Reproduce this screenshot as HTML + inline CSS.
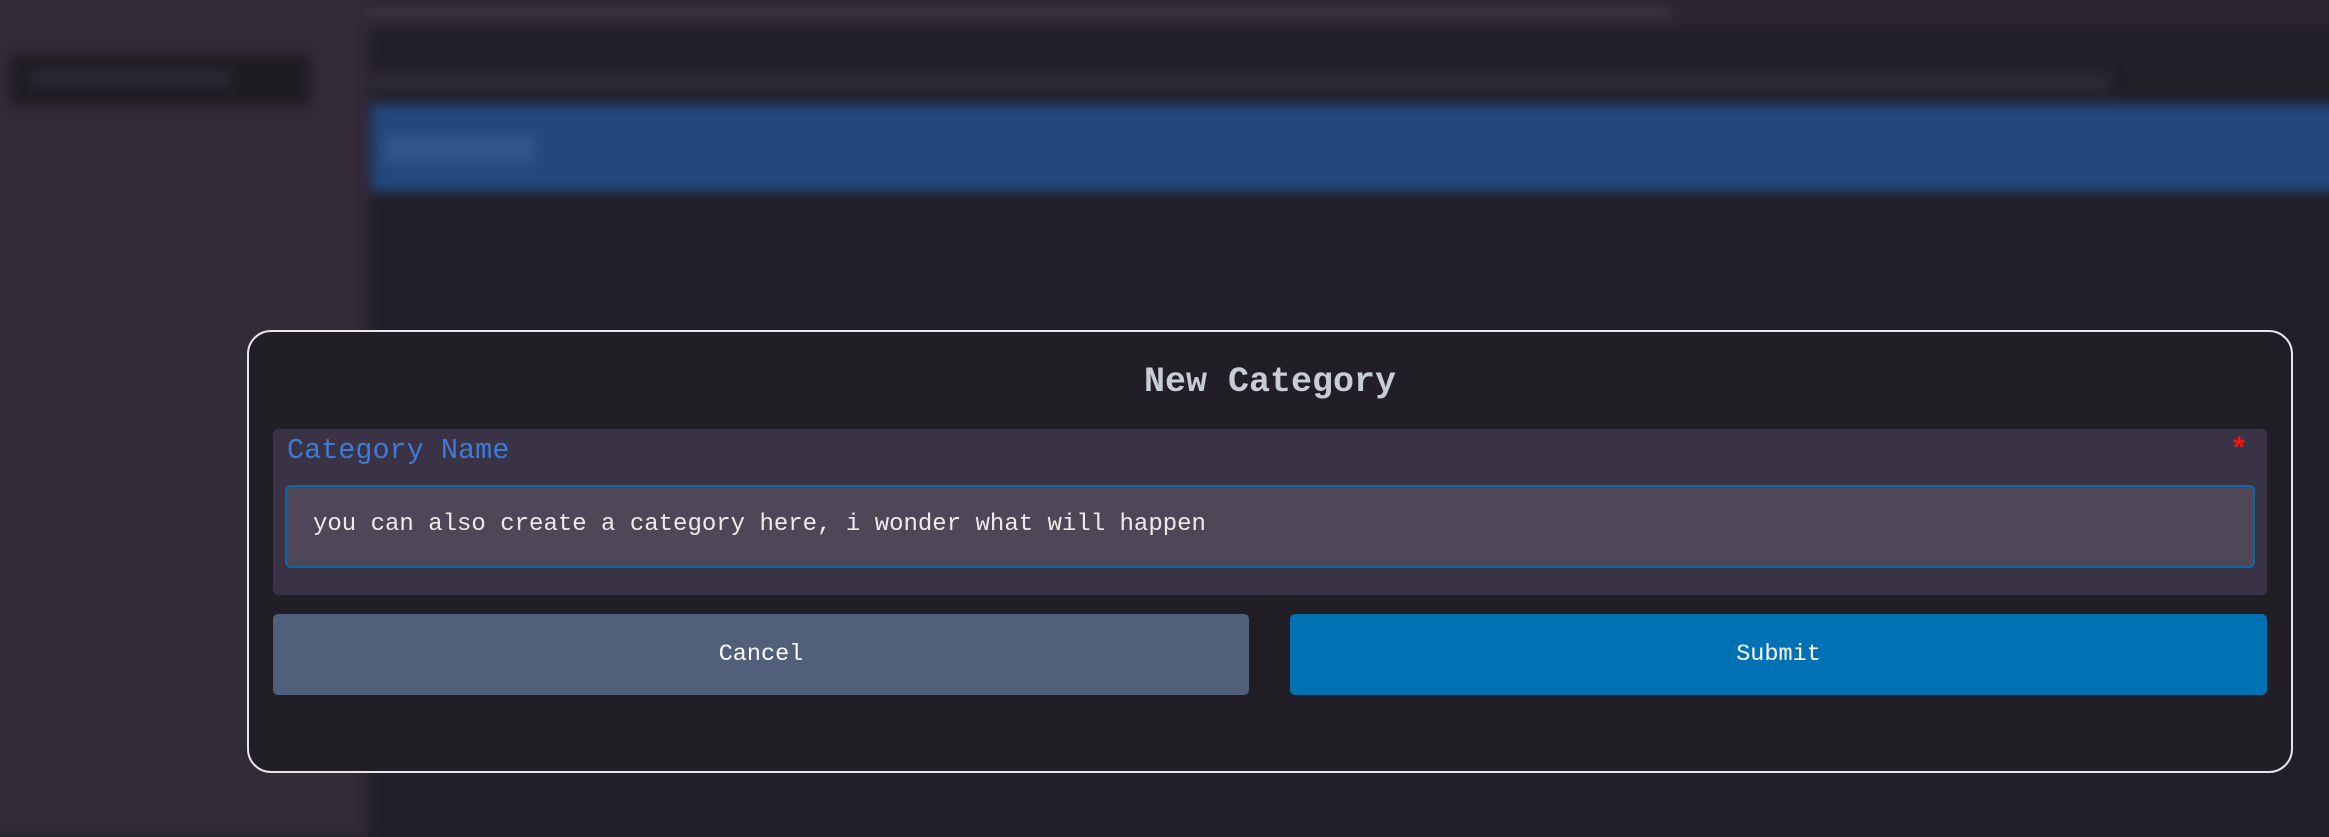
<!DOCTYPE html>
<html><head><meta charset="utf-8"><style>
html,body{margin:0;padding:0;width:2329px;height:817px;overflow:hidden;background:#221f29;font-family:"Liberation Mono",monospace;}
.bg{position:absolute;left:-20px;top:-20px;width:2369px;height:857px;filter:blur(6px);}
.bg>div{position:absolute;}
.side{left:0;top:0;width:388px;height:857px;background:#322b38;}
.top{left:0;top:0;width:2369px;height:50px;background:#2a2530;}
.topt{left:120px;top:26px;width:1570px;height:14px;background:#3a3440;}
.sbtn{left:30px;top:75px;width:300px;height:50px;background:#1e1b22;}
.sbtn2{left:50px;top:90px;width:200px;height:16px;background:#2e2a33;}
.line2{left:390px;top:92px;width:1740px;height:20px;background:#2d2935;}
.blue{left:391px;top:124px;width:1978px;height:88px;background:#22487c;}
.bl2{left:405px;top:155px;width:150px;height:28px;background:#33568a;}
.modal{position:absolute;left:247px;top:330px;width:2046px;height:443px;border:2px solid #e6e6ee;border-radius:24px;background:#211f25;box-sizing:border-box;}
.title{position:absolute;left:0;right:0;top:30px;text-align:center;color:#c8ccd4;font-weight:bold;font-size:35px;}
.panel{position:absolute;left:273px;top:429px;width:1994px;height:166px;background:#3a3245;border-radius:5px;}
.label{position:absolute;left:287px;top:434px;color:#3f7ad6;font-size:28.5px;}
.ast{position:absolute;left:2230px;top:434px;color:#ff1010;font-size:30px;font-weight:bold;}
.input{position:absolute;left:285px;top:485px;width:1970px;height:83px;box-sizing:border-box;border:2px solid #0a6aa8;border-radius:6px;background:#4f4757;}
.itext{position:absolute;left:313px;top:511px;color:#ececec;font-size:24px;}
.btn{position:absolute;top:614px;height:81px;border-radius:5px;color:#fff;font-size:23.5px;text-align:center;line-height:81px;}
</style></head><body>
<div class="bg">
<div class="top"></div><div class="topt"></div>
<div class="side"></div>
<div class="sbtn"></div><div class="sbtn2"></div>
<div class="line2"></div>
<div class="blue"></div><div class="bl2"></div>
</div>
<div class="modal"><div class="title">New Category</div></div>
<div class="panel"></div>
<div class="label">Category Name</div>
<div class="ast">*</div>
<div class="input"></div>
<div class="itext">you can also create a category here, i wonder what will happen</div>
<div class="btn" style="left:273px;width:976px;background:#525f7a;">Cancel</div>
<div class="btn" style="left:1290px;width:977px;background:#0071b2;">Submit</div>
</body></html>
